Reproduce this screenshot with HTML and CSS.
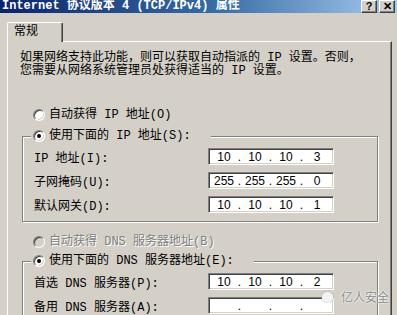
FILE: index.html
```html
<!DOCTYPE html>
<html lang="zh-CN">
<head>
    <meta charset="UTF-8">
    <title>Internet 协议版本 4 (TCP/IPv4) 属性</title>
    <link rel="stylesheet" href="styles.css">
</head>
<body>
    <div class="titulo">
        <span class="titulo-texto">Internet 协议版本 4 (TCP/IPv4) 属性</span>
        <div class="botones">
            <span class="boton">?</span>
            <span class="boton">✕</span>
        </div>
    </div>
    <div class="pestanas">
        <div class="pestana">常规</div>
    </div>
    <div class="panel">
        <p class="intro">如果网络支持此功能，则可以获取自动指派的 IP 设置。否则，<br>您需要从网络系统管理员处获得适当的 IP 设置。</p>

        <div class="opcion primera">
            <span class="radio"></span>自动获得 IP 地址(O)
        </div>
        <fieldset class="grupo">
            <legend class="opcion"><span class="radio marcado"></span>使用下面的 IP 地址(S):</legend>
            <div class="fila">
                <label>IP 地址(I):</label>
                <div class="ip"><span>10</span><i>.</i><span>10</span><i>.</i><span>10</span><i>.</i><span>3</span></div>
            </div>
            <div class="fila">
                <label>子网掩码(U):</label>
                <div class="ip"><span>255</span><i>.</i><span>255</span><i>.</i><span>255</span><i>.</i><span>0</span></div>
            </div>
            <div class="fila">
                <label>默认网关(D):</label>
                <div class="ip"><span>10</span><i>.</i><span>10</span><i>.</i><span>10</span><i>.</i><span>1</span></div>
            </div>
        </fieldset>

        <div class="opcion inactiva dns">
            <span class="radio"></span>自动获得 DNS 服务器地址(B)
        </div>
        <fieldset class="grupo grupo-dns">
            <legend class="opcion"><span class="radio marcado"></span>使用下面的 DNS 服务器地址(E):</legend>
            <div class="fila">
                <label>首选 DNS 服务器(P):</label>
                <div class="ip"><span>10</span><i>.</i><span>10</span><i>.</i><span>10</span><i>.</i><span>2</span></div>
            </div>
            <div class="fila">
                <label>备用 DNS 服务器(A):</label>
                <div class="ip"><span></span><i>.</i><span></span><i>.</i><span></span><i>.</i><span></span></div>
            </div>
        </fieldset>
    </div>

    <div class="marca">
        <span class="marca-icono"></span>亿人安全
    </div>
</body>
</html>
```

FILE: styles.css
```css
body{
    margin: 0;
    width: 397px;
    height: 315px;
    overflow: hidden;
    background-color: #d4d0c8;
    font-family: "Liberation Mono", "Noto Sans CJK SC", monospace;
    font-size: 12px;
    color: #000;
}
.titulo{
    height: 13px;
    display: flex;
    justify-content: space-between;
    align-items: flex-start;
    background: linear-gradient(to right, #0a246a, #3a6ea5 55%, #a6caf0);
}
.titulo-texto{
    color: #fff;
    font-weight: bold;
    line-height: 12px;
    padding-left: 2px;
    white-space: nowrap;
}
.botones{
    display: flex;
    gap: 2px;
    margin-right: 2px;
}
.boton{
    width: 14px;
    height: 11px;
    background-color: #d4d0c8;
    border-top: 1px solid #fff;
    border-left: 1px solid #fff;
    border-right: 1px solid #404040;
    border-bottom: 1px solid #404040;
    box-shadow: inset -1px -1px #808080;
    font-family: "Liberation Sans", sans-serif;
    font-weight: bold;
    font-size: 11px;
    line-height: 11px;
    text-align: center;
}
.pestanas{
    display: flex;
    padding: 9px 0 0 7px;
}
.pestana{
    position: relative;
    z-index: 1;
    width: 48px;
    height: 19px;
    margin-bottom: -1px;
    background-color: #d4d0c8;
    border-top: 1px solid #fff;
    border-left: 1px solid #fff;
    border-right: 1px solid #404040;
    box-shadow: inset -1px 0 #808080;
    border-top-left-radius: 2px;
    border-top-right-radius: 2px;
    padding-left: 6px;
    box-sizing: content-box;
    line-height: 19px;
}
.panel{
    margin: 0 5px 0 7px;
    height: 273px;
    border-top: 1px solid #fff;
    border-left: 1px solid #fff;
    border-right: 1px solid #404040;
    box-shadow: inset -1px 0 #808080;
}
.intro{
    margin: 10px 0 0 12px;
    line-height: 13px;
    white-space: nowrap;
}
.opcion{
    display: flex;
    align-items: center;
    height: 14px;
    line-height: 14px;
    white-space: nowrap;
}
.primera{
    margin: 30px 0 0 25px;
}
.radio{
    width: 10px;
    height: 10px;
    border-radius: 50%;
    background-color: #fff;
    border: 1px solid;
    border-color: #808080 #fff #fff #808080;
    box-shadow: inset 1px 1px #404040, inset -1px -1px #d4d0c8;
    margin-right: 4px;
    display: flex;
    align-items: center;
    justify-content: center;
}
.marcado::after{
    content: "";
    width: 4px;
    height: 4px;
    border-radius: 50%;
    background-color: #000;
}
.inactiva{
    color: #808080;
    text-shadow: 1px 1px #fff;
}
.inactiva .radio{
    background-color: #d4d0c8;
}
.grupo{
    width: 356px;
    box-sizing: border-box;
    margin: 7px 0 0 14px;
    padding: 5px 0 8px 11px;
    border: 1px solid #808080;
    box-shadow: inset 1px 1px #fff, 1px 1px #fff;
    display: flex;
    flex-direction: column;
    gap: 7px;
}
.grupo legend{
    margin-left: -3px;
    padding: 0 20px 0 2px;
    background-color: #d4d0c8;
}
.dns{
    margin: 13px 0 0 25px;
}
.grupo-dns{
    margin-top: 5px;
    padding-bottom: 20px;
}
.fila{
    display: flex;
    align-items: center;
    height: 17px;
}
.fila label{
    width: 174px;
    white-space: nowrap;
}
.ip{
    width: 120px;
    height: 13px;
    display: flex;
    align-items: center;
    background-color: #fff;
    border-top: 1px solid #808080;
    border-left: 1px solid #808080;
    border-right: 1px solid #fff;
    border-bottom: 1px solid #fff;
    box-shadow: inset 1px 1px #404040, inset -1px -1px #d4d0c8;
    padding: 1px 0 1px 4px;
    font-family: "Liberation Sans", sans-serif;
    font-size: 12px;
}
.ip span{
    width: 22px;
    text-align: center;
}
.ip i{
    font-style: normal;
    width: 9px;
    text-align: center;
}
.marca{
    position: absolute;
    left: 322px;
    top: 288px;
    display: flex;
    align-items: center;
    gap: 8px;
    font-family: "Noto Sans CJK SC", sans-serif;
    font-size: 12px;
    color: #8a8a8a;
    text-shadow: 0 0 2px #fff, 0 0 2px #fff;
}
.marca-icono{
    width: 11px;
    height: 10px;
    border-radius: 50% 50% 40% 40%;
    background-color: #f2f2f2;
    box-shadow: 0 0 2px #aaa;
}
```
